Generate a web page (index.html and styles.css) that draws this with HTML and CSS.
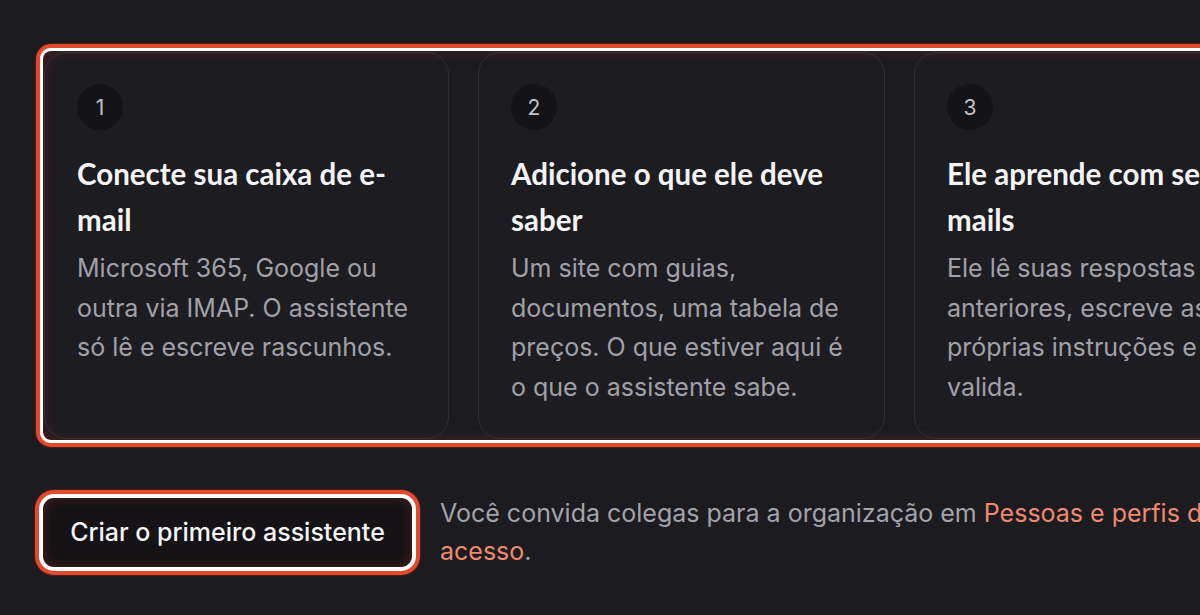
FILE: index.html
```html
<!DOCTYPE html>
<html lang="pt">
<head>
<meta charset="utf-8">
<link rel="stylesheet" href="styles.css">
</head>
<body>
<main class="page">
  <section class="steps">
    <article class="card">
      <div class="num">1</div>
      <h3 class="title">Conecte sua caixa de e-mail</h3>
      <p class="desc">Microsoft 365, Google ou outra via IMAP. O assistente só lê e escreve rascunhos.</p>
    </article>
    <article class="card">
      <div class="num">2</div>
      <h3 class="title">Adicione o que ele deve saber</h3>
      <p class="desc">Um site com guias, documentos, uma tabela de preços. O que estiver aqui é o que o assistente sabe.</p>
    </article>
    <article class="card">
      <div class="num">3</div>
      <h3 class="title">Ele aprende com seus e-mails</h3>
      <p class="desc">Ele lê suas respostas anteriores, escreve as próprias instruções e você valida.</p>
    </article>
  </section>
  <div class="actions">
    <button class="btn">Criar o primeiro assistente</button>
    <p class="note">Você convida colegas para a organização em <a class="link" href="#">Pessoas e perfis de acesso</a>.</p>
  </div>
</main>
</body>
</html>
```
FILE: styles.css
```css
* { box-sizing: border-box; }
html, body { margin: 0; padding: 0; }
body {
  background: #1c1b20;
  width: 1200px;
  height: 615px;
  overflow: hidden;
  font-family: Inter, "Liberation Sans", sans-serif;
}
.page {
  padding: 51px 0 0 43px;
  width: 1400px;
}
.steps {
  position: relative;
  display: grid;
  grid-template-columns: 405px 407px 406px;
  column-gap: 29px;
  padding: 1px;
  width: 1290px;
  border-radius: 8px;
  box-shadow: 0 0 0 3px #ffffff, 0 0 0 7px #e24a2e, 0 0 0 8px rgba(120,30,20,0.5);
}
.steps::after {
  content: "";
  position: absolute;
  inset: 0;
  border-radius: 8px;
  box-shadow: inset 0 0 14px rgba(200, 60, 40, 0.25);
  pointer-events: none;
}
.card {
  background: #1d1c21;
  border: 1px solid #2e2d33;
  border-radius: 22px;
  padding: 31px 30px 31px 32px;
}
.num {
  width: 46px;
  height: 46px;
  border-radius: 50%;
  background: #141317;
  color: #c4c4c8;
  font-size: 21px;
  display: flex;
  align-items: center;
  justify-content: center;
}
.title {
  margin: 21px 0 6px;
  font-family: Lato, "Noto Sans", sans-serif;
  font-weight: 700;
  font-size: 29.5px;
  line-height: 46px;
  color: #f4f4f6;
}
.desc {
  margin: 0;
  font-size: 25px;
  line-height: 39.5px;
  color: #a1a1a8;
}
.actions {
  display: flex;
  align-items: center;
  margin-top: 54px;
  gap: 28px;
}
.btn {
  flex: none;
  width: 369px;
  height: 69px;
  border: none;
  border-radius: 11px;
  background: #151316;
  color: #f6f6f8;
  font-family: Inter, "Liberation Sans", sans-serif;
  font-size: 25px;
  font-weight: 500;
  box-shadow: 0 0 0 4px #ffffff, 0 0 0 8px #e24a2e, 0 0 0 9px rgba(120,30,20,0.5), inset 0 0 12px rgba(200,60,40,0.3);
}
.note {
  margin: 0;
  font-size: 25px;
  line-height: 38px;
  color: #a3a3aa;
  width: 820px;
}
.link {
  color: #ef8a6e;
  text-decoration: none;
}
```
